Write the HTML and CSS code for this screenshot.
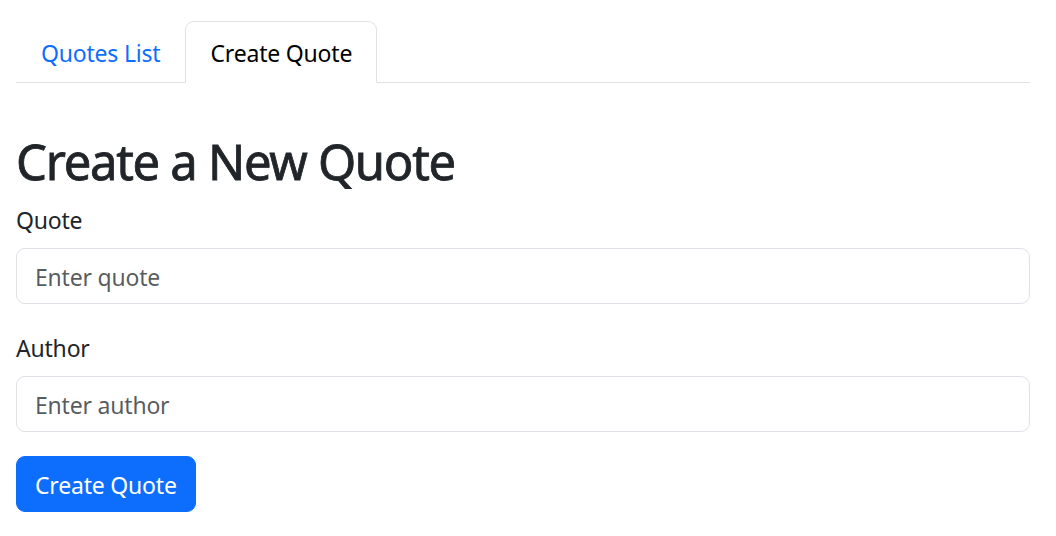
FILE: index.html
```html
<!DOCTYPE html>
<html lang="en">
<head>
<meta charset="utf-8">
<title>Create Quote</title>
<link rel="stylesheet" href="styles.css">
</head>
<body>
<div class="container">
  <ul class="tabs">
    <li><a class="tab" href="#">Quotes List</a></li>
    <li><a class="tab active" href="#">Create Quote</a></li>
  </ul>
  <h1 class="title">Create a New Quote</h1>
  <form class="form">
    <div class="field">
      <label class="label" for="quote">Quote</label>
      <input class="input" id="quote" type="text" placeholder="Enter quote">
    </div>
    <div class="field">
      <label class="label" for="author">Author</label>
      <input class="input" id="author" type="text" placeholder="Enter author">
    </div>
    <button class="btn" type="button">Create Quote</button>
  </form>
</div>
</body>
</html>
```

FILE: styles.css
```css
* { box-sizing: border-box; }
html, body { margin: 0; padding: 0; background: #fff; }
body {
  font-family: "Noto Sans", "Open Sans", sans-serif;
  font-size: 23px;
  line-height: 36px;
  letter-spacing: -0.2px;
  color: #212529;
}
.container {
  padding: 21px 26px 0 16px;
}
.tabs {
  list-style: none;
  margin: 0;
  padding: 0;
  display: flex;
  border-bottom: 1px solid #dee2e6;
}
.tabs li { margin-bottom: -1px; }
.tab {
  display: block;
  padding: 13px 24px 11px;
  border: 1px solid transparent;
  border-radius: 9px 9px 0 0;
  color: #0d6efd;
  text-decoration: none;
}
.tab.active {
  color: #000;
  background: #fff;
  border-color: #dee2e6 #dee2e6 #fff;
}
.title {
  margin: 49px 0 10px;
  font-size: 49px;
  font-weight: 400;
  line-height: 58px;
  letter-spacing: -1.3px;
  -webkit-text-stroke: 0.8px #212529;
  color: #212529;
}
.form { display: flex; flex-direction: column; align-items: flex-start; }
.field { width: 100%; margin-bottom: 24px; display: flex; flex-direction: column; }
.label { padding-top: 2px; margin-bottom: 10px; }
.input {
  width: 100%;
  height: 56px;
  padding: 10px 18px 8px;
  font: inherit;
  letter-spacing: inherit;
  color: #212529;
  border: 1px solid #dee2e6;
  border-radius: 9px;
  outline: none;
}
.input::placeholder { color: rgba(33,37,41,.75); }
.btn {
  height: 56px;
  padding: 10px 18px 8px;
  font: inherit;
  letter-spacing: inherit;
  color: #fff;
  background: #0d6efd;
  border: 1px solid #0d6efd;
  border-radius: 9px;
}
```
